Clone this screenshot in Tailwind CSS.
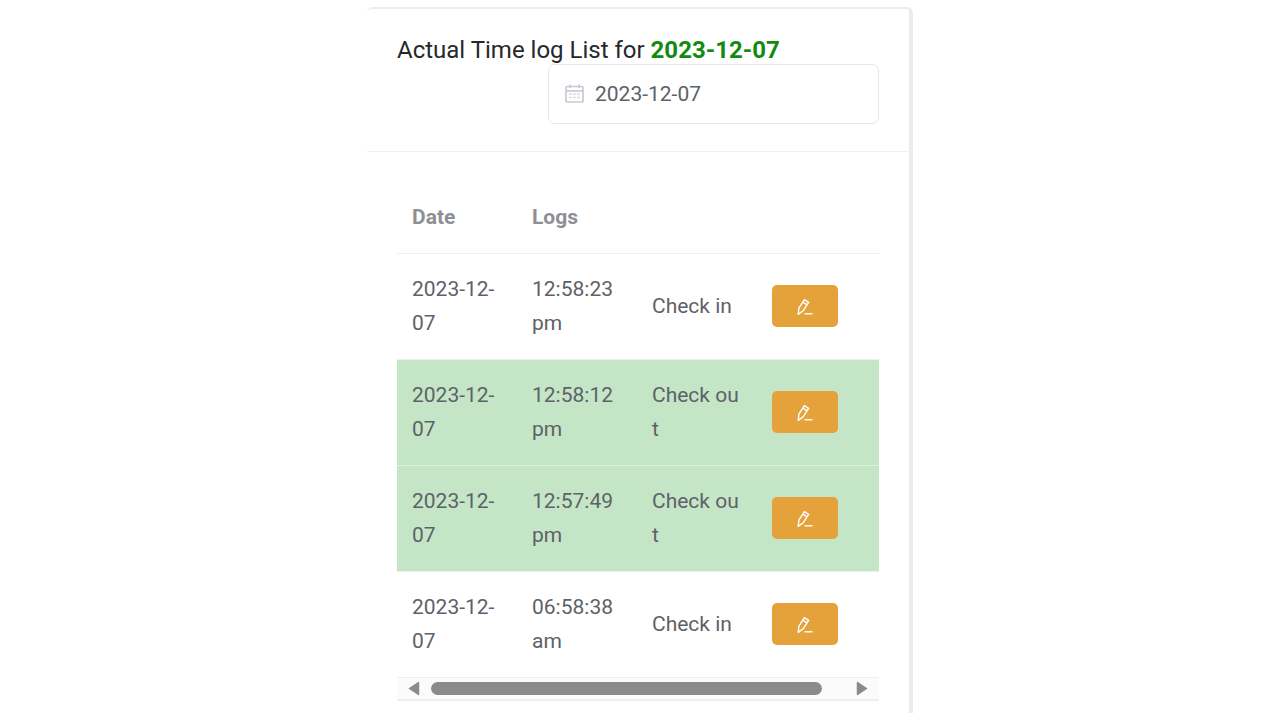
<!DOCTYPE html>
<html lang="en">

<head>
  <meta charset="UTF-8" />
  <title>Actual Time Log List</title>
  <script src="https://cdn.jsdelivr.net/npm/@tailwindcss/browser@4"></script>
</head>

<body class="bg-white font-['Roboto',sans-serif] overflow-hidden">
  <div class="h-[720px] pt-[7px] pl-[367px]">
    <div class="w-[546px] h-[706px] border-t-[2px] border-r-[4px] border-[#ececef] rounded-t-[6px] bg-white">

      <!-- card header -->
      <div class="h-[143px] border-b border-[#eef0f4] pl-[30px] pr-[31px] pt-[28px]">
        <h3 class="text-[24px] leading-[27px] text-[#26282c]">Actual Time log List for <span class="font-bold text-[#128a12]">2023-12-07</span></h3>
        <div class="ml-[151px] w-[331px] h-[60px] border border-[#e4e6ef] rounded-[7px] flex items-center pl-[16px] gap-[11px] text-[21px] leading-[28px] text-[#5e6268]">
          <svg class="w-[19px] h-[19px] -mt-[1px] text-[#c8cbd3]" viewBox="0 0 19 19" fill="none" stroke="currentColor" stroke-width="1.700">
            <rect x="1" y="2.500" width="17" height="15.500" rx="1" />
            <path d="M1 6.800h17M5 0.500v3.500M14 0.500v3.500" />
            <path d="M4.500 10h2M8.500 10h2M12.500 10h2M4.500 13.500h2M8.500 13.500h2M12.500 13.500h2" stroke-width="1.400" />
          </svg>
          <span>2023-12-07</span>
        </div>
      </div>

      <!-- table -->
      <div class="ml-[30px] w-[482px] mt-[29px]">
        <table class="w-[482px] table-fixed border-collapse text-[21px] leading-[34px] text-[#5e6268] break-all">
          <thead>
            <tr class="h-[72px] border-b border-[#eceef2] text-left text-[#8e8f94]">
              <th class="w-[120px] px-[15px] font-bold">Date</th>
              <th class="w-[120px] px-[15px] font-bold">Logs</th>
              <th class="w-[120px] px-[15px]"></th>
              <th class="w-[122px] px-[15px]"></th>
            </tr>
          </thead>
          <tbody>
            <tr class="h-[106px] border-b border-[#eceef2]">
              <td class="px-[15px]">2023-12-07</td>
              <td class="px-[15px]">12:58:23 pm</td>
              <td class="px-[15px]">Check in</td>
              <td class="px-[15px]">
                <button class="w-[66px] h-[42px] rounded-[5px] bg-[#e5a23a] flex items-center justify-center">
                  <svg class="w-[17px] h-[17px]" viewBox="0 0 17 17" fill="none" stroke="#fff" stroke-width="1.400" stroke-linejoin="round"><path d="M1.900 10.200L7.400 1.700L11.600 4.400L6.100 12.900L1.200 16.300Z" /><path d="M5.800 4.200L10 6.900" /><path d="M7.500 15.800h8" /></svg>
                </button>
              </td>
            </tr>
            <tr class="h-[106px] bg-[#c5e5c7] border-b border-[#e3f1e4]">
              <td class="px-[15px]">2023-12-07</td>
              <td class="px-[15px]">12:58:12 pm</td>
              <td class="px-[15px]">Check out</td>
              <td class="px-[15px]">
                <button class="w-[66px] h-[42px] rounded-[5px] bg-[#e5a23a] flex items-center justify-center">
                  <svg class="w-[17px] h-[17px]" viewBox="0 0 17 17" fill="none" stroke="#fff" stroke-width="1.400" stroke-linejoin="round"><path d="M1.900 10.200L7.400 1.700L11.600 4.400L6.100 12.900L1.200 16.300Z" /><path d="M5.800 4.200L10 6.900" /><path d="M7.500 15.800h8" /></svg>
                </button>
              </td>
            </tr>
            <tr class="h-[106px] bg-[#c5e5c7] border-b border-[#eceef2]">
              <td class="px-[15px]">2023-12-07</td>
              <td class="px-[15px]">12:57:49 pm</td>
              <td class="px-[15px]">Check out</td>
              <td class="px-[15px]">
                <button class="w-[66px] h-[42px] rounded-[5px] bg-[#e5a23a] flex items-center justify-center">
                  <svg class="w-[17px] h-[17px]" viewBox="0 0 17 17" fill="none" stroke="#fff" stroke-width="1.400" stroke-linejoin="round"><path d="M1.900 10.200L7.400 1.700L11.600 4.400L6.100 12.900L1.200 16.300Z" /><path d="M5.800 4.200L10 6.900" /><path d="M7.500 15.800h8" /></svg>
                </button>
              </td>
            </tr>
            <tr class="h-[106px] border-b border-[#eceef2]">
              <td class="px-[15px]">2023-12-07</td>
              <td class="px-[15px]">06:58:38 am</td>
              <td class="px-[15px]">Check in</td>
              <td class="px-[15px]">
                <button class="w-[66px] h-[42px] rounded-[5px] bg-[#e5a23a] flex items-center justify-center">
                  <svg class="w-[17px] h-[17px]" viewBox="0 0 17 17" fill="none" stroke="#fff" stroke-width="1.400" stroke-linejoin="round"><path d="M1.900 10.200L7.400 1.700L11.600 4.400L6.100 12.900L1.200 16.300Z" /><path d="M5.800 4.200L10 6.900" /><path d="M7.500 15.800h8" /></svg>
                </button>
              </td>
            </tr>
          </tbody>
        </table>

        <!-- horizontal scrollbar -->
        <div class="h-[23px] bg-[#fbfbfb] border-b-[2px] border-[#eceef3] flex items-center">
          <svg class="ml-[11px] w-[12px] h-[15px]" viewBox="0 0 12 15"><path d="M10.500 1.500V13.500L1.500 7.500Z" fill="#8b8b8b" stroke="#8b8b8b" stroke-width="1.500" stroke-linejoin="round" /></svg>
          <div class="ml-[11px] w-[391px] h-[13px] rounded-full bg-[#8b8b8b]"></div>
          <svg class="ml-[34px] w-[12px] h-[15px]" viewBox="0 0 12 15"><path d="M1.500 1.500V13.500L10.500 7.500Z" fill="#8b8b8b" stroke="#8b8b8b" stroke-width="1.500" stroke-linejoin="round" /></svg>
        </div>
      </div>
    </div>
  </div>
</body>

</html>
